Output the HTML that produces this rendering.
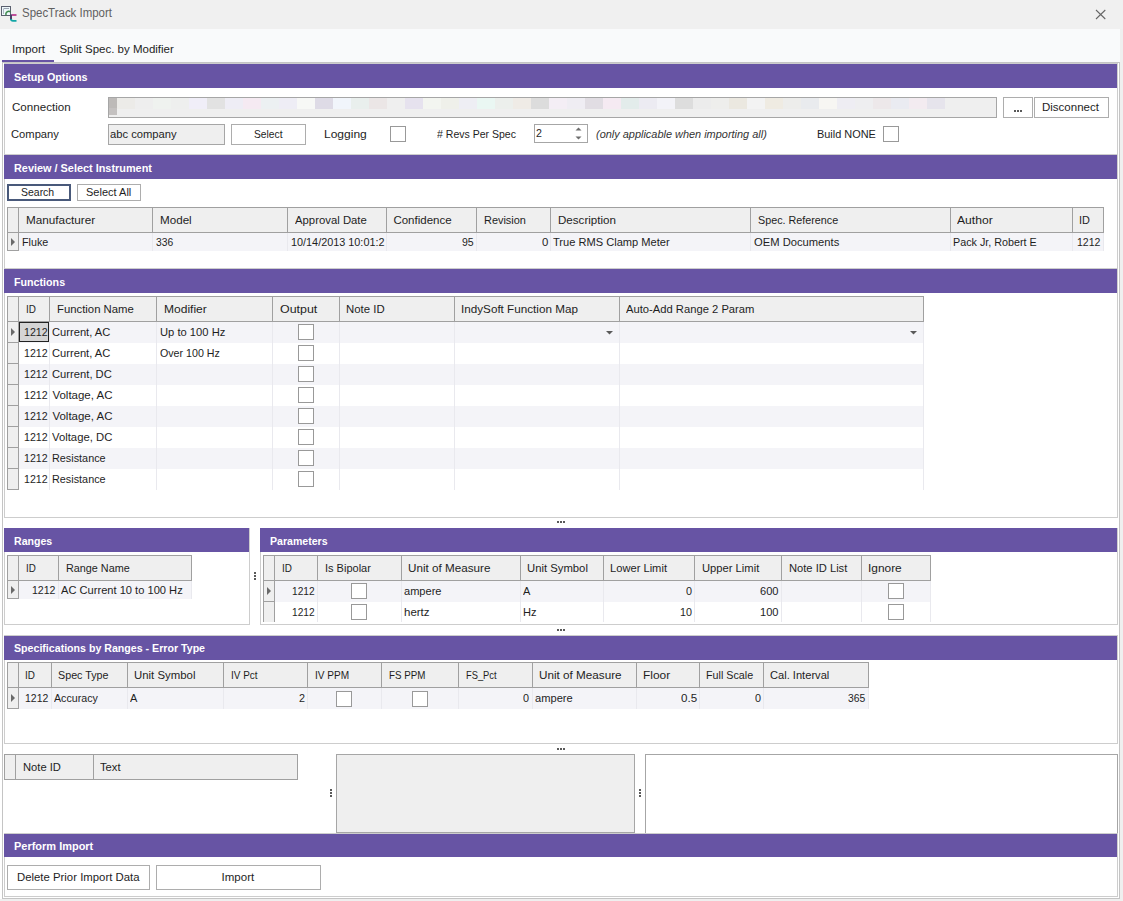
<!DOCTYPE html>
<html><head><meta charset="utf-8"><title>SpecTrack Import</title><style>
html,body{margin:0;padding:0;}
body{width:1123px;height:901px;position:relative;overflow:hidden;background:#ffffff;font-family:"Liberation Sans", sans-serif;}
body>div,body>svg{position:absolute;}
.t{white-space:nowrap;}
</style></head><body>
<div style="left:0px;top:0px;width:1123px;height:29px;background:#f0f0f0;"></div>
<div style="left:0px;top:29px;width:1123px;height:33px;background:#f9fafb;"></div>
<div class="t" style="left:22.20px;top:6.84px;font-size:12px;line-height:12px;font-weight:normal;color:#606060;font-style:normal;transform:scaleX(0.9548);transform-origin:0 0;">SpecTrack Import</div>
<svg style="left:1094px;top:8px" width="14" height="13" viewBox="0 0 14 13"><path d="M2 2 L11.3 11 M11.3 2 L2 11" stroke="#666666" stroke-width="1.05" fill="none"/></svg>
<svg style="left:0px;top:0px" width="20" height="26" viewBox="0 0 20 26"><rect x="1.5" y="6.5" width="9" height="9" fill="#eef7fa" stroke="#5a5f6e" stroke-width="1"/><path d="M3.5 8.5 H9" stroke="#9aa3b0" stroke-width="1"/><path d="M3.5 9 V14" stroke="#b0b8c4" stroke-width="1"/><path d="M6 15.2 A3 3 0 0 1 10.6 11.8" stroke="#3d8a4c" stroke-width="1.5" fill="none"/><rect x="11.5" y="14" width="5" height="2" fill="#c0509a"/><rect x="10" y="14.5" width="2" height="5.5" fill="#4b4068"/><path d="M11 19 Q11 20.8 13 20.8 H16.5" stroke="#12a6a6" stroke-width="1.8" fill="none"/></svg>
<div class="t" style="left:11.70px;top:44.27px;font-size:11.5px;line-height:11.5px;font-weight:normal;color:#1e1e1e;font-style:normal;transform:scaleX(1.0153);transform-origin:0 0;">Import</div>
<div class="t" style="left:59.40px;top:44.27px;font-size:11.5px;line-height:11.5px;font-weight:normal;color:#1e1e1e;font-style:normal;">Split Spec. by Modifier</div>
<div style="left:2px;top:60px;width:52px;height:2px;background:#6754a4;"></div>
<div style="left:2px;top:62px;width:1118px;height:837px;background:#ffffff;"></div>
<div style="left:2px;top:62px;width:1118px;height:1px;background:#c4c4c4;"></div>
<div style="left:2px;top:60px;width:52px;height:2px;background:#6754a4;"></div>
<div style="left:2px;top:62px;width:1px;height:837px;background:#c4c4c4;"></div>
<div style="left:1119px;top:62px;width:1px;height:837px;background:#c4c4c4;"></div>
<div style="left:2px;top:898px;width:1118px;height:1px;background:#c4c4c4;"></div>
<div style="left:1120px;top:29px;width:3px;height:872px;background:#efefef;"></div>
<div style="left:0px;top:899px;width:1123px;height:2px;background:#efefef;"></div>
<div style="left:4px;top:63px;width:1px;height:92px;background:#cdcdcd;"></div>
<div style="left:1117px;top:63px;width:1px;height:92px;background:#cdcdcd;"></div>
<div style="left:4px;top:154px;width:1114px;height:1px;background:#cdcdcd;"></div>
<div style="left:4px;top:63px;width:1114px;height:1px;background:#cdcdcd;"></div>
<div style="left:4px;top:64px;width:1113px;height:24px;background:#6754a4;"></div>
<div class="t" style="left:14.40px;top:72.27px;font-size:11.5px;line-height:11.5px;font-weight:bold;color:#ffffff;font-style:normal;transform:scaleX(0.9364);transform-origin:0 0;">Setup Options</div>
<div class="t" style="left:11.90px;top:102.27px;font-size:11.5px;line-height:11.5px;font-weight:normal;color:#1e1e1e;font-style:normal;transform:scaleX(1.0070);transform-origin:0 0;">Connection</div>
<div class="t" style="left:11.20px;top:129.27px;font-size:11.5px;line-height:11.5px;font-weight:normal;color:#1e1e1e;font-style:normal;transform:scaleX(0.9732);transform-origin:0 0;">Company</div>
<div style="left:108px;top:97px;width:889px;height:21px;background:#efefef;box-sizing:border-box;border:1px solid #a6a6a6;"></div>
<div style="left:117px;top:98px;width:18px;height:11px;background:#ecebe8;"></div>
<div style="left:135px;top:98px;width:18px;height:11px;background:#eeeeee;"></div>
<div style="left:153px;top:98px;width:18px;height:11px;background:#eff2ef;"></div>
<div style="left:171px;top:98px;width:18px;height:11px;background:#eeefee;"></div>
<div style="left:189px;top:98px;width:18px;height:11px;background:#f0eef8;"></div>
<div style="left:207px;top:98px;width:18px;height:11px;background:#e2e2e2;"></div>
<div style="left:225px;top:98px;width:18px;height:11px;background:#eeedf5;"></div>
<div style="left:243px;top:98px;width:18px;height:11px;background:#f5eaf2;"></div>
<div style="left:261px;top:98px;width:18px;height:11px;background:#ecf0f2;"></div>
<div style="left:279px;top:98px;width:18px;height:11px;background:#eeedf5;"></div>
<div style="left:297px;top:98px;width:18px;height:11px;background:#f7f8f6;"></div>
<div style="left:315px;top:98px;width:18px;height:11px;background:#dedbe6;"></div>
<div style="left:333px;top:98px;width:18px;height:11px;background:#f1f5fb;"></div>
<div style="left:351px;top:98px;width:18px;height:11px;background:#e9efed;"></div>
<div style="left:369px;top:98px;width:18px;height:11px;background:#ebe6e6;"></div>
<div style="left:387px;top:98px;width:18px;height:11px;background:#efefef;"></div>
<div style="left:405px;top:98px;width:18px;height:11px;background:#e6e2ee;"></div>
<div style="left:423px;top:98px;width:18px;height:11px;background:#f3f5f0;"></div>
<div style="left:441px;top:98px;width:18px;height:11px;background:#eff0ea;"></div>
<div style="left:459px;top:98px;width:18px;height:11px;background:#eeeef4;"></div>
<div style="left:477px;top:98px;width:18px;height:11px;background:#eaf7f3;"></div>
<div style="left:495px;top:98px;width:18px;height:11px;background:#ecefec;"></div>
<div style="left:513px;top:98px;width:18px;height:11px;background:#efebe6;"></div>
<div style="left:531px;top:98px;width:18px;height:11px;background:#dcdcdc;"></div>
<div style="left:549px;top:98px;width:18px;height:11px;background:#f4eef5;"></div>
<div style="left:567px;top:98px;width:18px;height:11px;background:#efedf3;"></div>
<div style="left:585px;top:98px;width:18px;height:11px;background:#e1dde3;"></div>
<div style="left:603px;top:98px;width:18px;height:11px;background:#f5eaf2;"></div>
<div style="left:621px;top:98px;width:18px;height:11px;background:#e3eceb;"></div>
<div style="left:639px;top:98px;width:18px;height:11px;background:#ecebf2;"></div>
<div style="left:657px;top:98px;width:18px;height:11px;background:#f3f3f8;"></div>
<div style="left:675px;top:98px;width:18px;height:11px;background:#dddddd;"></div>
<div style="left:693px;top:98px;width:18px;height:11px;background:#ececec;"></div>
<div style="left:711px;top:98px;width:18px;height:11px;background:#eeeeec;"></div>
<div style="left:729px;top:98px;width:18px;height:11px;background:#ebe8e0;"></div>
<div style="left:747px;top:98px;width:18px;height:11px;background:#f3f3f3;"></div>
<div style="left:765px;top:98px;width:18px;height:11px;background:#efebe2;"></div>
<div style="left:783px;top:98px;width:18px;height:11px;background:#ededeb;"></div>
<div style="left:801px;top:98px;width:18px;height:11px;background:#e9ebee;"></div>
<div style="left:819px;top:98px;width:18px;height:11px;background:#f7f6f3;"></div>
<div style="left:837px;top:98px;width:18px;height:11px;background:#eeedf3;"></div>
<div style="left:855px;top:98px;width:18px;height:11px;background:#eeeef0;"></div>
<div style="left:873px;top:98px;width:18px;height:11px;background:#ede8ea;"></div>
<div style="left:891px;top:98px;width:18px;height:11px;background:#eaebf1;"></div>
<div style="left:909px;top:98px;width:18px;height:11px;background:#f3ebf0;"></div>
<div style="left:927px;top:98px;width:18px;height:11px;background:#e6e4ec;"></div>
<div style="left:109px;top:98px;width:8px;height:17px;background:#c4c1c0;"></div>
<div style="left:109px;top:98px;width:8px;height:10px;background:#bdbab8;"></div>
<div style="left:1003px;top:97px;width:30px;height:21px;box-sizing:border-box;border:1px solid #adadad;background:#ffffff;"></div>
<svg style="left:1014px;top:110px" width="8" height="2"><rect x="0" y="0" width="2" height="2" fill="#5a5a5a"/><rect x="3" y="0" width="2" height="2" fill="#5a5a5a"/><rect x="6" y="0" width="2" height="2" fill="#5a5a5a"/></svg>
<div style="left:1034px;top:97px;width:75px;height:21px;box-sizing:border-box;border:1px solid #adadad;background:#ffffff;"></div>
<div class="t" style="left:1042.00px;top:101.77px;font-size:11.5px;line-height:11.5px;font-weight:normal;color:#1e1e1e;font-style:normal;">Disconnect</div>
<div style="left:108px;top:124px;width:117px;height:21px;background:#efefef;box-sizing:border-box;border:1px solid #a6a6a6;"></div>
<div class="t" style="left:110.40px;top:129.27px;font-size:11.5px;line-height:11.5px;font-weight:normal;color:#1e1e1e;font-style:normal;transform:scaleX(0.9733);transform-origin:0 0;">abc company</div>
<div style="left:231px;top:124px;width:75px;height:21px;box-sizing:border-box;border:1px solid #adadad;background:#ffffff;"></div>
<div class="t" style="left:253.90px;top:129.27px;font-size:11.5px;line-height:11.5px;font-weight:normal;color:#1e1e1e;font-style:normal;transform:scaleX(0.8915);transform-origin:0 0;">Select</div>
<div class="t" style="left:324.20px;top:129.27px;font-size:11.5px;line-height:11.5px;font-weight:normal;color:#1e1e1e;font-style:normal;transform:scaleX(1.0454);transform-origin:0 0;">Logging</div>
<div style="left:390px;top:126px;width:16px;height:16px;background:#ffffff;box-sizing:border-box;border:1px solid #999999;"></div>
<div class="t" style="left:436.90px;top:129.27px;font-size:11.5px;line-height:11.5px;font-weight:normal;color:#1e1e1e;font-style:normal;transform:scaleX(0.9153);transform-origin:0 0;"># Revs Per Spec</div>
<div style="left:534px;top:124px;width:54px;height:19px;background:#ffffff;box-sizing:border-box;border:1px solid #a6a6a6;"></div>
<div class="t" style="left:535.90px;top:128.27px;font-size:11.5px;line-height:11.5px;font-weight:normal;color:#1e1e1e;font-style:normal;transform:scaleX(0.9244);transform-origin:0 0;">2</div>
<svg style="left:574px;top:126px" width="9" height="15" viewBox="0 0 9 15"><path d="M1.5 4.5 L4.5 1.5 L7.5 4.5 Z" fill="#6d6d6d"/><path d="M1.5 10.5 L4.5 13.5 L7.5 10.5 Z" fill="#6d6d6d"/></svg>
<div class="t" style="left:596.20px;top:129.27px;font-size:11.5px;line-height:11.5px;font-weight:normal;color:#333333;font-style:italic;transform:scaleX(0.9508);transform-origin:0 0;">(only applicable when importing all)</div>
<div class="t" style="left:817.30px;top:129.27px;font-size:11.5px;line-height:11.5px;font-weight:normal;color:#1e1e1e;font-style:normal;transform:scaleX(0.9502);transform-origin:0 0;">Build NONE</div>
<div style="left:883px;top:126px;width:16px;height:16px;background:#ffffff;box-sizing:border-box;border:1px solid #999999;"></div>
<div style="left:4px;top:154px;width:1px;height:115px;background:#cdcdcd;"></div>
<div style="left:1117px;top:154px;width:1px;height:115px;background:#cdcdcd;"></div>
<div style="left:4px;top:268px;width:1114px;height:1px;background:#cdcdcd;"></div>
<div style="left:4px;top:154px;width:1114px;height:1px;background:#cdcdcd;"></div>
<div style="left:4px;top:155px;width:1113px;height:24px;background:#6754a4;"></div>
<div class="t" style="left:14.40px;top:163.27px;font-size:11.5px;line-height:11.5px;font-weight:bold;color:#ffffff;font-style:normal;transform:scaleX(0.9464);transform-origin:0 0;">Review / Select Instrument</div>
<div style="left:7px;top:184px;width:64px;height:17px;box-sizing:border-box;border:2px solid #49597a;background:#ffffff;"></div>
<div class="t" style="left:21.40px;top:187.27px;font-size:11.5px;line-height:11.5px;font-weight:normal;color:#1e1e1e;font-style:normal;transform:scaleX(0.9107);transform-origin:0 0;">Search</div>
<div style="left:77px;top:184px;width:64px;height:17px;box-sizing:border-box;border:1px solid #adadad;background:#ffffff;"></div>
<div class="t" style="left:85.50px;top:187.27px;font-size:11.5px;line-height:11.5px;font-weight:normal;color:#1e1e1e;font-style:normal;transform:scaleX(0.9573);transform-origin:0 0;">Select All</div>
<div style="left:7px;top:207px;width:1097px;height:26px;background:#efefef;"></div>
<div style="left:7px;top:207px;width:1097px;height:1px;background:#a0a0a0;"></div>
<div style="left:7px;top:232px;width:1097px;height:1px;background:#a0a0a0;"></div>
<div style="left:7px;top:207px;width:1px;height:26px;background:#a0a0a0;"></div>
<div style="left:1103px;top:207px;width:1px;height:26px;background:#a0a0a0;"></div>
<div style="left:18px;top:207px;width:1px;height:25px;background:#a0a0a0;"></div>
<div style="left:152px;top:207px;width:1px;height:25px;background:#a0a0a0;"></div>
<div style="left:287px;top:207px;width:1px;height:25px;background:#a0a0a0;"></div>
<div style="left:386px;top:207px;width:1px;height:25px;background:#a0a0a0;"></div>
<div style="left:476px;top:207px;width:1px;height:25px;background:#a0a0a0;"></div>
<div style="left:550px;top:207px;width:1px;height:25px;background:#a0a0a0;"></div>
<div style="left:750px;top:207px;width:1px;height:25px;background:#a0a0a0;"></div>
<div style="left:950px;top:207px;width:1px;height:25px;background:#a0a0a0;"></div>
<div style="left:1072px;top:207px;width:1px;height:25px;background:#a0a0a0;"></div>
<div style="left:19px;top:233px;width:1085px;height:18px;background:#f4f4f8;"></div>
<div style="left:7px;top:233px;width:11px;height:18px;background:#efefef;"></div>
<div style="left:7px;top:233px;width:1px;height:18px;background:#a0a0a0;"></div>
<div style="left:18px;top:233px;width:1px;height:18px;background:#a0a0a0;"></div>
<div style="left:7px;top:250px;width:12px;height:1px;background:#a0a0a0;"></div>
<div style="left:152px;top:233px;width:1px;height:18px;background:#e9e9ee;"></div>
<div style="left:287px;top:233px;width:1px;height:18px;background:#e9e9ee;"></div>
<div style="left:386px;top:233px;width:1px;height:18px;background:#e9e9ee;"></div>
<div style="left:476px;top:233px;width:1px;height:18px;background:#e9e9ee;"></div>
<div style="left:550px;top:233px;width:1px;height:18px;background:#e9e9ee;"></div>
<div style="left:750px;top:233px;width:1px;height:18px;background:#e9e9ee;"></div>
<div style="left:950px;top:233px;width:1px;height:18px;background:#e9e9ee;"></div>
<div style="left:1072px;top:233px;width:1px;height:18px;background:#e9e9ee;"></div>
<div style="left:1103px;top:233px;width:1px;height:18px;background:#e9e9ee;"></div>
<svg style="left:11px;top:238px" width="5" height="8" viewBox="0 0 5 8"><path d="M0 0 L4 4 L0 8 Z" fill="#6a6a6a"/></svg>
<div class="t" style="left:25.60px;top:214.77px;font-size:11.5px;line-height:11.5px;font-weight:normal;color:#1e1e1e;font-style:normal;transform:scaleX(1.0202);transform-origin:0 0;">Manufacturer</div>
<div class="t" style="left:159.70px;top:214.77px;font-size:11.5px;line-height:11.5px;font-weight:normal;color:#1e1e1e;font-style:normal;transform:scaleX(1.0116);transform-origin:0 0;">Model</div>
<div class="t" style="left:294.60px;top:214.77px;font-size:11.5px;line-height:11.5px;font-weight:normal;color:#1e1e1e;font-style:normal;transform:scaleX(0.9856);transform-origin:0 0;">Approval Date</div>
<div class="t" style="left:393.40px;top:214.77px;font-size:11.5px;line-height:11.5px;font-weight:normal;color:#1e1e1e;font-style:normal;">Confidence</div>
<div class="t" style="left:483.50px;top:214.77px;font-size:11.5px;line-height:11.5px;font-weight:normal;color:#1e1e1e;font-style:normal;transform:scaleX(0.9501);transform-origin:0 0;">Revision</div>
<div class="t" style="left:557.50px;top:214.77px;font-size:11.5px;line-height:11.5px;font-weight:normal;color:#1e1e1e;font-style:normal;transform:scaleX(1.0070);transform-origin:0 0;">Description</div>
<div class="t" style="left:757.70px;top:214.77px;font-size:11.5px;line-height:11.5px;font-weight:normal;color:#1e1e1e;font-style:normal;transform:scaleX(0.9361);transform-origin:0 0;">Spec. Reference</div>
<div class="t" style="left:957.30px;top:214.77px;font-size:11.5px;line-height:11.5px;font-weight:normal;color:#1e1e1e;font-style:normal;transform:scaleX(1.0541);transform-origin:0 0;">Author</div>
<div class="t" style="left:1078.70px;top:214.77px;font-size:11.5px;line-height:11.5px;font-weight:normal;color:#1e1e1e;font-style:normal;transform:scaleX(0.9478);transform-origin:0 0;">ID</div>
<div class="t" style="left:21.90px;top:236.77px;font-size:11.5px;line-height:11.5px;font-weight:normal;color:#1e1e1e;font-style:normal;transform:scaleX(0.9354);transform-origin:0 0;">Fluke</div>
<div class="t" style="left:155.70px;top:236.77px;font-size:11.5px;line-height:11.5px;font-weight:normal;color:#1e1e1e;font-style:normal;transform:scaleX(0.8956);transform-origin:0 0;">336</div>
<div class="t" style="left:290.50px;top:236.77px;font-size:11.5px;line-height:11.5px;font-weight:normal;color:#1e1e1e;font-style:normal;transform:scaleX(0.9432);transform-origin:0 0;">10/14/2013 10:01:2</div>
<div class="t" style="left:462.00px;top:236.77px;font-size:11.5px;line-height:11.5px;font-weight:normal;color:#1e1e1e;font-style:normal;transform:scaleX(0.9166);transform-origin:0 0;">95</div>
<div class="t" style="left:541.50px;top:236.77px;font-size:11.5px;line-height:11.5px;font-weight:normal;color:#1e1e1e;font-style:normal;transform:scaleX(0.9871);transform-origin:0 0;">0</div>
<div class="t" style="left:553.00px;top:236.77px;font-size:11.5px;line-height:11.5px;font-weight:normal;color:#1e1e1e;font-style:normal;transform:scaleX(0.9646);transform-origin:0 0;">True RMS Clamp Meter</div>
<div class="t" style="left:753.60px;top:236.77px;font-size:11.5px;line-height:11.5px;font-weight:normal;color:#1e1e1e;font-style:normal;transform:scaleX(0.9741);transform-origin:0 0;">OEM Documents</div>
<div class="t" style="left:953.00px;top:236.77px;font-size:11.5px;line-height:11.5px;font-weight:normal;color:#1e1e1e;font-style:normal;transform:scaleX(0.9355);transform-origin:0 0;">Pack Jr, Robert E</div>
<div class="t" style="left:1077.00px;top:236.77px;font-size:11.5px;line-height:11.5px;font-weight:normal;color:#1e1e1e;font-style:normal;transform:scaleX(0.9184);transform-origin:0 0;">1212</div>
<div style="left:4px;top:268px;width:1px;height:250px;background:#cdcdcd;"></div>
<div style="left:1117px;top:268px;width:1px;height:250px;background:#cdcdcd;"></div>
<div style="left:4px;top:517px;width:1114px;height:1px;background:#cdcdcd;"></div>
<div style="left:4px;top:268px;width:1114px;height:1px;background:#cdcdcd;"></div>
<div style="left:4px;top:269px;width:1113px;height:24px;background:#6754a4;"></div>
<div class="t" style="left:14.40px;top:277.27px;font-size:11.5px;line-height:11.5px;font-weight:bold;color:#ffffff;font-style:normal;transform:scaleX(0.9296);transform-origin:0 0;">Functions</div>
<div style="left:7px;top:296px;width:917px;height:26px;background:#efefef;"></div>
<div style="left:7px;top:296px;width:917px;height:1px;background:#a0a0a0;"></div>
<div style="left:7px;top:321px;width:917px;height:1px;background:#a0a0a0;"></div>
<div style="left:7px;top:296px;width:1px;height:26px;background:#a0a0a0;"></div>
<div style="left:923px;top:296px;width:1px;height:26px;background:#a0a0a0;"></div>
<div style="left:18px;top:296px;width:1px;height:25px;background:#a0a0a0;"></div>
<div style="left:49px;top:296px;width:1px;height:25px;background:#a0a0a0;"></div>
<div style="left:156px;top:296px;width:1px;height:25px;background:#a0a0a0;"></div>
<div style="left:272px;top:296px;width:1px;height:25px;background:#a0a0a0;"></div>
<div style="left:339px;top:296px;width:1px;height:25px;background:#a0a0a0;"></div>
<div style="left:454px;top:296px;width:1px;height:25px;background:#a0a0a0;"></div>
<div style="left:619px;top:296px;width:1px;height:25px;background:#a0a0a0;"></div>
<div style="left:19px;top:322px;width:905px;height:21px;background:#f4f4f8;"></div>
<div style="left:7px;top:322px;width:11px;height:21px;background:#efefef;"></div>
<div style="left:7px;top:322px;width:1px;height:21px;background:#a0a0a0;"></div>
<div style="left:18px;top:322px;width:1px;height:21px;background:#a0a0a0;"></div>
<div style="left:7px;top:342px;width:12px;height:1px;background:#a0a0a0;"></div>
<div style="left:49px;top:322px;width:1px;height:21px;background:#e9e9ee;"></div>
<div style="left:156px;top:322px;width:1px;height:21px;background:#e9e9ee;"></div>
<div style="left:272px;top:322px;width:1px;height:21px;background:#e9e9ee;"></div>
<div style="left:339px;top:322px;width:1px;height:21px;background:#e9e9ee;"></div>
<div style="left:454px;top:322px;width:1px;height:21px;background:#e9e9ee;"></div>
<div style="left:619px;top:322px;width:1px;height:21px;background:#e9e9ee;"></div>
<div style="left:923px;top:322px;width:1px;height:21px;background:#e9e9ee;"></div>
<svg style="left:11px;top:328px" width="5" height="8" viewBox="0 0 5 8"><path d="M0 0 L4 4 L0 8 Z" fill="#6a6a6a"/></svg>
<div style="left:19px;top:343px;width:905px;height:21px;background:#ffffff;"></div>
<div style="left:7px;top:343px;width:11px;height:21px;background:#efefef;"></div>
<div style="left:7px;top:343px;width:1px;height:21px;background:#a0a0a0;"></div>
<div style="left:18px;top:343px;width:1px;height:21px;background:#a0a0a0;"></div>
<div style="left:7px;top:363px;width:12px;height:1px;background:#a0a0a0;"></div>
<div style="left:49px;top:343px;width:1px;height:21px;background:#e9e9ee;"></div>
<div style="left:156px;top:343px;width:1px;height:21px;background:#e9e9ee;"></div>
<div style="left:272px;top:343px;width:1px;height:21px;background:#e9e9ee;"></div>
<div style="left:339px;top:343px;width:1px;height:21px;background:#e9e9ee;"></div>
<div style="left:454px;top:343px;width:1px;height:21px;background:#e9e9ee;"></div>
<div style="left:619px;top:343px;width:1px;height:21px;background:#e9e9ee;"></div>
<div style="left:923px;top:343px;width:1px;height:21px;background:#e9e9ee;"></div>
<div style="left:19px;top:364px;width:905px;height:21px;background:#f4f4f8;"></div>
<div style="left:7px;top:364px;width:11px;height:21px;background:#efefef;"></div>
<div style="left:7px;top:364px;width:1px;height:21px;background:#a0a0a0;"></div>
<div style="left:18px;top:364px;width:1px;height:21px;background:#a0a0a0;"></div>
<div style="left:7px;top:384px;width:12px;height:1px;background:#a0a0a0;"></div>
<div style="left:49px;top:364px;width:1px;height:21px;background:#e9e9ee;"></div>
<div style="left:156px;top:364px;width:1px;height:21px;background:#e9e9ee;"></div>
<div style="left:272px;top:364px;width:1px;height:21px;background:#e9e9ee;"></div>
<div style="left:339px;top:364px;width:1px;height:21px;background:#e9e9ee;"></div>
<div style="left:454px;top:364px;width:1px;height:21px;background:#e9e9ee;"></div>
<div style="left:619px;top:364px;width:1px;height:21px;background:#e9e9ee;"></div>
<div style="left:923px;top:364px;width:1px;height:21px;background:#e9e9ee;"></div>
<div style="left:19px;top:385px;width:905px;height:21px;background:#ffffff;"></div>
<div style="left:7px;top:385px;width:11px;height:21px;background:#efefef;"></div>
<div style="left:7px;top:385px;width:1px;height:21px;background:#a0a0a0;"></div>
<div style="left:18px;top:385px;width:1px;height:21px;background:#a0a0a0;"></div>
<div style="left:7px;top:405px;width:12px;height:1px;background:#a0a0a0;"></div>
<div style="left:49px;top:385px;width:1px;height:21px;background:#e9e9ee;"></div>
<div style="left:156px;top:385px;width:1px;height:21px;background:#e9e9ee;"></div>
<div style="left:272px;top:385px;width:1px;height:21px;background:#e9e9ee;"></div>
<div style="left:339px;top:385px;width:1px;height:21px;background:#e9e9ee;"></div>
<div style="left:454px;top:385px;width:1px;height:21px;background:#e9e9ee;"></div>
<div style="left:619px;top:385px;width:1px;height:21px;background:#e9e9ee;"></div>
<div style="left:923px;top:385px;width:1px;height:21px;background:#e9e9ee;"></div>
<div style="left:19px;top:406px;width:905px;height:21px;background:#f4f4f8;"></div>
<div style="left:7px;top:406px;width:11px;height:21px;background:#efefef;"></div>
<div style="left:7px;top:406px;width:1px;height:21px;background:#a0a0a0;"></div>
<div style="left:18px;top:406px;width:1px;height:21px;background:#a0a0a0;"></div>
<div style="left:7px;top:426px;width:12px;height:1px;background:#a0a0a0;"></div>
<div style="left:49px;top:406px;width:1px;height:21px;background:#e9e9ee;"></div>
<div style="left:156px;top:406px;width:1px;height:21px;background:#e9e9ee;"></div>
<div style="left:272px;top:406px;width:1px;height:21px;background:#e9e9ee;"></div>
<div style="left:339px;top:406px;width:1px;height:21px;background:#e9e9ee;"></div>
<div style="left:454px;top:406px;width:1px;height:21px;background:#e9e9ee;"></div>
<div style="left:619px;top:406px;width:1px;height:21px;background:#e9e9ee;"></div>
<div style="left:923px;top:406px;width:1px;height:21px;background:#e9e9ee;"></div>
<div style="left:19px;top:427px;width:905px;height:21px;background:#ffffff;"></div>
<div style="left:7px;top:427px;width:11px;height:21px;background:#efefef;"></div>
<div style="left:7px;top:427px;width:1px;height:21px;background:#a0a0a0;"></div>
<div style="left:18px;top:427px;width:1px;height:21px;background:#a0a0a0;"></div>
<div style="left:7px;top:447px;width:12px;height:1px;background:#a0a0a0;"></div>
<div style="left:49px;top:427px;width:1px;height:21px;background:#e9e9ee;"></div>
<div style="left:156px;top:427px;width:1px;height:21px;background:#e9e9ee;"></div>
<div style="left:272px;top:427px;width:1px;height:21px;background:#e9e9ee;"></div>
<div style="left:339px;top:427px;width:1px;height:21px;background:#e9e9ee;"></div>
<div style="left:454px;top:427px;width:1px;height:21px;background:#e9e9ee;"></div>
<div style="left:619px;top:427px;width:1px;height:21px;background:#e9e9ee;"></div>
<div style="left:923px;top:427px;width:1px;height:21px;background:#e9e9ee;"></div>
<div style="left:19px;top:448px;width:905px;height:21px;background:#f4f4f8;"></div>
<div style="left:7px;top:448px;width:11px;height:21px;background:#efefef;"></div>
<div style="left:7px;top:448px;width:1px;height:21px;background:#a0a0a0;"></div>
<div style="left:18px;top:448px;width:1px;height:21px;background:#a0a0a0;"></div>
<div style="left:7px;top:468px;width:12px;height:1px;background:#a0a0a0;"></div>
<div style="left:49px;top:448px;width:1px;height:21px;background:#e9e9ee;"></div>
<div style="left:156px;top:448px;width:1px;height:21px;background:#e9e9ee;"></div>
<div style="left:272px;top:448px;width:1px;height:21px;background:#e9e9ee;"></div>
<div style="left:339px;top:448px;width:1px;height:21px;background:#e9e9ee;"></div>
<div style="left:454px;top:448px;width:1px;height:21px;background:#e9e9ee;"></div>
<div style="left:619px;top:448px;width:1px;height:21px;background:#e9e9ee;"></div>
<div style="left:923px;top:448px;width:1px;height:21px;background:#e9e9ee;"></div>
<div style="left:19px;top:469px;width:905px;height:21px;background:#ffffff;"></div>
<div style="left:7px;top:469px;width:11px;height:21px;background:#efefef;"></div>
<div style="left:7px;top:469px;width:1px;height:21px;background:#a0a0a0;"></div>
<div style="left:18px;top:469px;width:1px;height:21px;background:#a0a0a0;"></div>
<div style="left:7px;top:489px;width:12px;height:1px;background:#a0a0a0;"></div>
<div style="left:49px;top:469px;width:1px;height:21px;background:#e9e9ee;"></div>
<div style="left:156px;top:469px;width:1px;height:21px;background:#e9e9ee;"></div>
<div style="left:272px;top:469px;width:1px;height:21px;background:#e9e9ee;"></div>
<div style="left:339px;top:469px;width:1px;height:21px;background:#e9e9ee;"></div>
<div style="left:454px;top:469px;width:1px;height:21px;background:#e9e9ee;"></div>
<div style="left:619px;top:469px;width:1px;height:21px;background:#e9e9ee;"></div>
<div style="left:923px;top:469px;width:1px;height:21px;background:#e9e9ee;"></div>
<div class="t" style="left:25.60px;top:303.97px;font-size:11.5px;line-height:11.5px;font-weight:normal;color:#1e1e1e;font-style:normal;transform:scaleX(0.8609);transform-origin:0 0;">ID</div>
<div class="t" style="left:56.60px;top:303.97px;font-size:11.5px;line-height:11.5px;font-weight:normal;color:#1e1e1e;font-style:normal;transform:scaleX(0.9850);transform-origin:0 0;">Function Name</div>
<div class="t" style="left:163.90px;top:303.97px;font-size:11.5px;line-height:11.5px;font-weight:normal;color:#1e1e1e;font-style:normal;transform:scaleX(1.0469);transform-origin:0 0;">Modifier</div>
<div class="t" style="left:279.60px;top:303.97px;font-size:11.5px;line-height:11.5px;font-weight:normal;color:#1e1e1e;font-style:normal;transform:scaleX(1.0812);transform-origin:0 0;">Output</div>
<div class="t" style="left:346.10px;top:303.97px;font-size:11.5px;line-height:11.5px;font-weight:normal;color:#1e1e1e;font-style:normal;transform:scaleX(0.9901);transform-origin:0 0;">Note ID</div>
<div class="t" style="left:461.30px;top:303.97px;font-size:11.5px;line-height:11.5px;font-weight:normal;color:#1e1e1e;font-style:normal;transform:scaleX(1.0160);transform-origin:0 0;">IndySoft Function Map</div>
<div class="t" style="left:626.10px;top:303.97px;font-size:11.5px;line-height:11.5px;font-weight:normal;color:#1e1e1e;font-style:normal;transform:scaleX(0.9751);transform-origin:0 0;">Auto-Add Range 2 Param</div>
<div style="left:19px;top:322px;width:30px;height:20px;background:#d5d5d5;box-sizing:border-box;border:1px solid #222222;"></div>
<div class="t" style="left:23.50px;top:326.57px;font-size:11.5px;line-height:11.5px;font-weight:normal;color:#1e1e1e;font-style:normal;transform:scaleX(0.9262);transform-origin:0 0;">1212</div>
<div class="t" style="left:52.40px;top:326.57px;font-size:11.5px;line-height:11.5px;font-weight:normal;color:#1e1e1e;font-style:normal;transform:scaleX(0.9703);transform-origin:0 0;">Current, AC</div>
<div class="t" style="left:159.60px;top:326.57px;font-size:11.5px;line-height:11.5px;font-weight:normal;color:#1e1e1e;font-style:normal;transform:scaleX(0.9731);transform-origin:0 0;">Up to 100 Hz</div>
<div style="left:298px;top:324px;width:16px;height:16px;background:#ffffff;box-sizing:border-box;border:1px solid #999999;"></div>
<div class="t" style="left:23.50px;top:347.57px;font-size:11.5px;line-height:11.5px;font-weight:normal;color:#1e1e1e;font-style:normal;transform:scaleX(0.9262);transform-origin:0 0;">1212</div>
<div class="t" style="left:52.40px;top:347.57px;font-size:11.5px;line-height:11.5px;font-weight:normal;color:#1e1e1e;font-style:normal;transform:scaleX(0.9703);transform-origin:0 0;">Current, AC</div>
<div class="t" style="left:159.60px;top:347.57px;font-size:11.5px;line-height:11.5px;font-weight:normal;color:#1e1e1e;font-style:normal;transform:scaleX(0.9261);transform-origin:0 0;">Over 100 Hz</div>
<div style="left:298px;top:345px;width:16px;height:16px;background:#ffffff;box-sizing:border-box;border:1px solid #999999;"></div>
<div class="t" style="left:23.50px;top:368.57px;font-size:11.5px;line-height:11.5px;font-weight:normal;color:#1e1e1e;font-style:normal;transform:scaleX(0.9262);transform-origin:0 0;">1212</div>
<div class="t" style="left:52.40px;top:368.57px;font-size:11.5px;line-height:11.5px;font-weight:normal;color:#1e1e1e;font-style:normal;transform:scaleX(0.9747);transform-origin:0 0;">Current, DC</div>
<div style="left:298px;top:366px;width:16px;height:16px;background:#ffffff;box-sizing:border-box;border:1px solid #999999;"></div>
<div class="t" style="left:23.50px;top:389.57px;font-size:11.5px;line-height:11.5px;font-weight:normal;color:#1e1e1e;font-style:normal;transform:scaleX(0.9262);transform-origin:0 0;">1212</div>
<div class="t" style="left:52.40px;top:389.57px;font-size:11.5px;line-height:11.5px;font-weight:normal;color:#1e1e1e;font-style:normal;">Voltage, AC</div>
<div style="left:298px;top:387px;width:16px;height:16px;background:#ffffff;box-sizing:border-box;border:1px solid #999999;"></div>
<div class="t" style="left:23.50px;top:410.57px;font-size:11.5px;line-height:11.5px;font-weight:normal;color:#1e1e1e;font-style:normal;transform:scaleX(0.9262);transform-origin:0 0;">1212</div>
<div class="t" style="left:52.40px;top:410.57px;font-size:11.5px;line-height:11.5px;font-weight:normal;color:#1e1e1e;font-style:normal;">Voltage, AC</div>
<div style="left:298px;top:408px;width:16px;height:16px;background:#ffffff;box-sizing:border-box;border:1px solid #999999;"></div>
<div class="t" style="left:23.50px;top:431.57px;font-size:11.5px;line-height:11.5px;font-weight:normal;color:#1e1e1e;font-style:normal;transform:scaleX(0.9262);transform-origin:0 0;">1212</div>
<div class="t" style="left:52.40px;top:431.57px;font-size:11.5px;line-height:11.5px;font-weight:normal;color:#1e1e1e;font-style:normal;transform:scaleX(0.9828);transform-origin:0 0;">Voltage, DC</div>
<div style="left:298px;top:429px;width:16px;height:16px;background:#ffffff;box-sizing:border-box;border:1px solid #999999;"></div>
<div class="t" style="left:23.50px;top:452.57px;font-size:11.5px;line-height:11.5px;font-weight:normal;color:#1e1e1e;font-style:normal;transform:scaleX(0.9262);transform-origin:0 0;">1212</div>
<div class="t" style="left:52.40px;top:452.57px;font-size:11.5px;line-height:11.5px;font-weight:normal;color:#1e1e1e;font-style:normal;transform:scaleX(0.9425);transform-origin:0 0;">Resistance</div>
<div style="left:298px;top:450px;width:16px;height:16px;background:#ffffff;box-sizing:border-box;border:1px solid #999999;"></div>
<div class="t" style="left:23.50px;top:473.57px;font-size:11.5px;line-height:11.5px;font-weight:normal;color:#1e1e1e;font-style:normal;transform:scaleX(0.9262);transform-origin:0 0;">1212</div>
<div class="t" style="left:52.40px;top:473.57px;font-size:11.5px;line-height:11.5px;font-weight:normal;color:#1e1e1e;font-style:normal;transform:scaleX(0.9425);transform-origin:0 0;">Resistance</div>
<div style="left:298px;top:471px;width:16px;height:16px;background:#ffffff;box-sizing:border-box;border:1px solid #999999;"></div>
<svg style="left:605.5px;top:331px" width="7" height="4" viewBox="0 0 7 4"><path d="M0 0 H7 L3.5 3.5 Z" fill="#5a5a5a"/></svg>
<svg style="left:909.5px;top:331px" width="7" height="4" viewBox="0 0 7 4"><path d="M0 0 H7 L3.5 3.5 Z" fill="#5a5a5a"/></svg>
<svg style="left:557px;top:521px" width="8" height="2"><rect x="0" y="0" width="2" height="2" fill="#5a5a5a"/><rect x="3" y="0" width="2" height="2" fill="#5a5a5a"/><rect x="6" y="0" width="2" height="2" fill="#5a5a5a"/></svg>
<div style="left:4px;top:528px;width:1px;height:97px;background:#cdcdcd;"></div>
<div style="left:249px;top:528px;width:1px;height:97px;background:#cdcdcd;"></div>
<div style="left:4px;top:624px;width:246px;height:1px;background:#cdcdcd;"></div>
<div style="left:4px;top:528px;width:246px;height:1px;background:#cdcdcd;"></div>
<div style="left:4px;top:528px;width:245px;height:24px;background:#6754a4;"></div>
<div class="t" style="left:14.40px;top:536.27px;font-size:11.5px;line-height:11.5px;font-weight:bold;color:#ffffff;font-style:normal;transform:scaleX(0.9201);transform-origin:0 0;">Ranges</div>
<div style="left:7px;top:555px;width:185px;height:26px;background:#efefef;"></div>
<div style="left:7px;top:555px;width:185px;height:1px;background:#a0a0a0;"></div>
<div style="left:7px;top:580px;width:185px;height:1px;background:#a0a0a0;"></div>
<div style="left:7px;top:555px;width:1px;height:26px;background:#a0a0a0;"></div>
<div style="left:191px;top:555px;width:1px;height:26px;background:#a0a0a0;"></div>
<div style="left:18px;top:555px;width:1px;height:25px;background:#a0a0a0;"></div>
<div style="left:58px;top:555px;width:1px;height:25px;background:#a0a0a0;"></div>
<div style="left:19px;top:581px;width:173px;height:18px;background:#f4f4f8;"></div>
<div style="left:7px;top:581px;width:11px;height:18px;background:#efefef;"></div>
<div style="left:7px;top:581px;width:1px;height:18px;background:#a0a0a0;"></div>
<div style="left:18px;top:581px;width:1px;height:18px;background:#a0a0a0;"></div>
<div style="left:7px;top:598px;width:12px;height:1px;background:#a0a0a0;"></div>
<div style="left:58px;top:581px;width:1px;height:18px;background:#e9e9ee;"></div>
<div style="left:191px;top:581px;width:1px;height:18px;background:#e9e9ee;"></div>
<svg style="left:11px;top:586px" width="5" height="8" viewBox="0 0 5 8"><path d="M0 0 L4 4 L0 8 Z" fill="#6a6a6a"/></svg>
<div class="t" style="left:25.50px;top:562.77px;font-size:11.5px;line-height:11.5px;font-weight:normal;color:#1e1e1e;font-style:normal;transform:scaleX(0.8522);transform-origin:0 0;">ID</div>
<div class="t" style="left:65.70px;top:562.77px;font-size:11.5px;line-height:11.5px;font-weight:normal;color:#1e1e1e;font-style:normal;transform:scaleX(0.9404);transform-origin:0 0;">Range Name</div>
<div class="t" style="left:32.40px;top:585.27px;font-size:11.5px;line-height:11.5px;font-weight:normal;color:#1e1e1e;font-style:normal;transform:scaleX(0.9184);transform-origin:0 0;">1212</div>
<div class="t" style="left:61.20px;top:585.27px;font-size:11.5px;line-height:11.5px;font-weight:normal;color:#1e1e1e;font-style:normal;transform:scaleX(0.9664);transform-origin:0 0;">AC Current 10 to 100 Hz</div>
<svg style="left:254px;top:572px" width="2" height="8"><rect x="0" y="0" width="2" height="2" fill="#5a5a5a"/><rect x="0" y="3" width="2" height="2" fill="#5a5a5a"/><rect x="0" y="6" width="2" height="2" fill="#5a5a5a"/></svg>
<div style="left:260px;top:528px;width:1px;height:97px;background:#cdcdcd;"></div>
<div style="left:1117px;top:528px;width:1px;height:97px;background:#cdcdcd;"></div>
<div style="left:260px;top:624px;width:858px;height:1px;background:#cdcdcd;"></div>
<div style="left:260px;top:528px;width:858px;height:1px;background:#cdcdcd;"></div>
<div style="left:260px;top:528px;width:857px;height:24px;background:#6754a4;"></div>
<div class="t" style="left:270.40px;top:536.27px;font-size:11.5px;line-height:11.5px;font-weight:bold;color:#ffffff;font-style:normal;transform:scaleX(0.9190);transform-origin:0 0;">Parameters</div>
<div style="left:263px;top:555px;width:668px;height:26px;background:#efefef;"></div>
<div style="left:263px;top:555px;width:668px;height:1px;background:#a0a0a0;"></div>
<div style="left:263px;top:580px;width:668px;height:1px;background:#a0a0a0;"></div>
<div style="left:263px;top:555px;width:1px;height:26px;background:#a0a0a0;"></div>
<div style="left:930px;top:555px;width:1px;height:26px;background:#a0a0a0;"></div>
<div style="left:274px;top:555px;width:1px;height:25px;background:#a0a0a0;"></div>
<div style="left:317px;top:555px;width:1px;height:25px;background:#a0a0a0;"></div>
<div style="left:401px;top:555px;width:1px;height:25px;background:#a0a0a0;"></div>
<div style="left:520px;top:555px;width:1px;height:25px;background:#a0a0a0;"></div>
<div style="left:603px;top:555px;width:1px;height:25px;background:#a0a0a0;"></div>
<div style="left:694px;top:555px;width:1px;height:25px;background:#a0a0a0;"></div>
<div style="left:781px;top:555px;width:1px;height:25px;background:#a0a0a0;"></div>
<div style="left:861px;top:555px;width:1px;height:25px;background:#a0a0a0;"></div>
<div style="left:275px;top:581px;width:656px;height:21px;background:#f4f4f8;"></div>
<div style="left:263px;top:581px;width:11px;height:21px;background:#efefef;"></div>
<div style="left:263px;top:581px;width:1px;height:21px;background:#a0a0a0;"></div>
<div style="left:274px;top:581px;width:1px;height:21px;background:#a0a0a0;"></div>
<div style="left:263px;top:601px;width:12px;height:1px;background:#a0a0a0;"></div>
<div style="left:317px;top:581px;width:1px;height:21px;background:#e9e9ee;"></div>
<div style="left:401px;top:581px;width:1px;height:21px;background:#e9e9ee;"></div>
<div style="left:520px;top:581px;width:1px;height:21px;background:#e9e9ee;"></div>
<div style="left:603px;top:581px;width:1px;height:21px;background:#e9e9ee;"></div>
<div style="left:694px;top:581px;width:1px;height:21px;background:#e9e9ee;"></div>
<div style="left:781px;top:581px;width:1px;height:21px;background:#e9e9ee;"></div>
<div style="left:861px;top:581px;width:1px;height:21px;background:#e9e9ee;"></div>
<div style="left:930px;top:581px;width:1px;height:21px;background:#e9e9ee;"></div>
<svg style="left:267px;top:587px" width="5" height="8" viewBox="0 0 5 8"><path d="M0 0 L4 4 L0 8 Z" fill="#6a6a6a"/></svg>
<div style="left:275px;top:602px;width:656px;height:20px;background:#ffffff;"></div>
<div style="left:263px;top:602px;width:11px;height:20px;background:#efefef;"></div>
<div style="left:263px;top:602px;width:1px;height:20px;background:#a0a0a0;"></div>
<div style="left:274px;top:602px;width:1px;height:20px;background:#a0a0a0;"></div>
<div style="left:317px;top:602px;width:1px;height:20px;background:#e9e9ee;"></div>
<div style="left:401px;top:602px;width:1px;height:20px;background:#e9e9ee;"></div>
<div style="left:520px;top:602px;width:1px;height:20px;background:#e9e9ee;"></div>
<div style="left:603px;top:602px;width:1px;height:20px;background:#e9e9ee;"></div>
<div style="left:694px;top:602px;width:1px;height:20px;background:#e9e9ee;"></div>
<div style="left:781px;top:602px;width:1px;height:20px;background:#e9e9ee;"></div>
<div style="left:861px;top:602px;width:1px;height:20px;background:#e9e9ee;"></div>
<div style="left:930px;top:602px;width:1px;height:20px;background:#e9e9ee;"></div>
<div class="t" style="left:281.60px;top:562.77px;font-size:11.5px;line-height:11.5px;font-weight:normal;color:#1e1e1e;font-style:normal;transform:scaleX(0.8609);transform-origin:0 0;">ID</div>
<div class="t" style="left:324.50px;top:562.77px;font-size:11.5px;line-height:11.5px;font-weight:normal;color:#1e1e1e;font-style:normal;transform:scaleX(0.9571);transform-origin:0 0;">Is Bipolar</div>
<div class="t" style="left:408.20px;top:562.77px;font-size:11.5px;line-height:11.5px;font-weight:normal;color:#1e1e1e;font-style:normal;transform:scaleX(1.0149);transform-origin:0 0;">Unit of Measure</div>
<div class="t" style="left:527.40px;top:562.77px;font-size:11.5px;line-height:11.5px;font-weight:normal;color:#1e1e1e;font-style:normal;transform:scaleX(0.9825);transform-origin:0 0;">Unit Symbol</div>
<div class="t" style="left:610.30px;top:562.77px;font-size:11.5px;line-height:11.5px;font-weight:normal;color:#1e1e1e;font-style:normal;transform:scaleX(0.9690);transform-origin:0 0;">Lower Limit</div>
<div class="t" style="left:702.00px;top:562.77px;font-size:11.5px;line-height:11.5px;font-weight:normal;color:#1e1e1e;font-style:normal;transform:scaleX(0.9741);transform-origin:0 0;">Upper Limit</div>
<div class="t" style="left:788.50px;top:562.77px;font-size:11.5px;line-height:11.5px;font-weight:normal;color:#1e1e1e;font-style:normal;transform:scaleX(0.9703);transform-origin:0 0;">Note ID List</div>
<div class="t" style="left:867.60px;top:562.77px;font-size:11.5px;line-height:11.5px;font-weight:normal;color:#1e1e1e;font-style:normal;transform:scaleX(1.0337);transform-origin:0 0;">Ignore</div>
<div class="t" style="left:292.00px;top:586.27px;font-size:11.5px;line-height:11.5px;font-weight:normal;color:#1e1e1e;font-style:normal;transform:scaleX(0.8832);transform-origin:0 0;">1212</div>
<div style="left:351px;top:583px;width:16px;height:16px;background:#ffffff;box-sizing:border-box;border:1px solid #999999;"></div>
<div class="t" style="left:404.00px;top:586.27px;font-size:11.5px;line-height:11.5px;font-weight:normal;color:#1e1e1e;font-style:normal;transform:scaleX(0.9619);transform-origin:0 0;">ampere</div>
<div class="t" style="left:522.60px;top:586.27px;font-size:11.5px;line-height:11.5px;font-weight:normal;color:#1e1e1e;font-style:normal;transform:scaleX(0.9604);transform-origin:0 0;">A</div>
<div class="t" style="left:686.00px;top:586.27px;font-size:11.5px;line-height:11.5px;font-weight:normal;color:#1e1e1e;font-style:normal;transform:scaleX(0.9401);transform-origin:0 0;">0</div>
<div class="t" style="left:760.30px;top:586.27px;font-size:11.5px;line-height:11.5px;font-weight:normal;color:#1e1e1e;font-style:normal;transform:scaleX(0.9633);transform-origin:0 0;">600</div>
<div style="left:888px;top:583px;width:16px;height:16px;background:#ffffff;box-sizing:border-box;border:1px solid #999999;"></div>
<div class="t" style="left:292.00px;top:607.27px;font-size:11.5px;line-height:11.5px;font-weight:normal;color:#1e1e1e;font-style:normal;transform:scaleX(0.8832);transform-origin:0 0;">1212</div>
<div style="left:351px;top:604px;width:16px;height:16px;background:#ffffff;box-sizing:border-box;border:1px solid #999999;"></div>
<div class="t" style="left:404.00px;top:607.27px;font-size:11.5px;line-height:11.5px;font-weight:normal;color:#1e1e1e;font-style:normal;">hertz</div>
<div class="t" style="left:522.60px;top:607.27px;font-size:11.5px;line-height:11.5px;font-weight:normal;color:#1e1e1e;font-style:normal;transform:scaleX(0.9622);transform-origin:0 0;">Hz</div>
<div class="t" style="left:680.10px;top:607.27px;font-size:11.5px;line-height:11.5px;font-weight:normal;color:#1e1e1e;font-style:normal;transform:scaleX(0.9322);transform-origin:0 0;">10</div>
<div class="t" style="left:760.30px;top:607.27px;font-size:11.5px;line-height:11.5px;font-weight:normal;color:#1e1e1e;font-style:normal;transform:scaleX(0.9633);transform-origin:0 0;">100</div>
<div style="left:888px;top:604px;width:16px;height:16px;background:#ffffff;box-sizing:border-box;border:1px solid #999999;"></div>
<svg style="left:557px;top:629px" width="8" height="2"><rect x="0" y="0" width="2" height="2" fill="#5a5a5a"/><rect x="3" y="0" width="2" height="2" fill="#5a5a5a"/><rect x="6" y="0" width="2" height="2" fill="#5a5a5a"/></svg>
<div style="left:4px;top:635px;width:1px;height:109px;background:#cdcdcd;"></div>
<div style="left:1117px;top:635px;width:1px;height:109px;background:#cdcdcd;"></div>
<div style="left:4px;top:743px;width:1114px;height:1px;background:#cdcdcd;"></div>
<div style="left:4px;top:635px;width:1114px;height:1px;background:#cdcdcd;"></div>
<div style="left:4px;top:636px;width:1113px;height:24px;background:#6754a4;"></div>
<div class="t" style="left:14.40px;top:643.27px;font-size:11.5px;line-height:11.5px;font-weight:bold;color:#ffffff;font-style:normal;transform:scaleX(0.9235);transform-origin:0 0;">Specifications by Ranges - Error Type</div>
<div style="left:7px;top:662px;width:862px;height:26px;background:#efefef;"></div>
<div style="left:7px;top:662px;width:862px;height:1px;background:#a0a0a0;"></div>
<div style="left:7px;top:687px;width:862px;height:1px;background:#a0a0a0;"></div>
<div style="left:7px;top:662px;width:1px;height:26px;background:#a0a0a0;"></div>
<div style="left:868px;top:662px;width:1px;height:26px;background:#a0a0a0;"></div>
<div style="left:18px;top:662px;width:1px;height:25px;background:#a0a0a0;"></div>
<div style="left:51px;top:662px;width:1px;height:25px;background:#a0a0a0;"></div>
<div style="left:127px;top:662px;width:1px;height:25px;background:#a0a0a0;"></div>
<div style="left:223px;top:662px;width:1px;height:25px;background:#a0a0a0;"></div>
<div style="left:307px;top:662px;width:1px;height:25px;background:#a0a0a0;"></div>
<div style="left:381px;top:662px;width:1px;height:25px;background:#a0a0a0;"></div>
<div style="left:458px;top:662px;width:1px;height:25px;background:#a0a0a0;"></div>
<div style="left:532px;top:662px;width:1px;height:25px;background:#a0a0a0;"></div>
<div style="left:636px;top:662px;width:1px;height:25px;background:#a0a0a0;"></div>
<div style="left:699px;top:662px;width:1px;height:25px;background:#a0a0a0;"></div>
<div style="left:763px;top:662px;width:1px;height:25px;background:#a0a0a0;"></div>
<div style="left:19px;top:688px;width:850px;height:21px;background:#f4f4f8;"></div>
<div style="left:7px;top:688px;width:11px;height:21px;background:#efefef;"></div>
<div style="left:7px;top:688px;width:1px;height:21px;background:#a0a0a0;"></div>
<div style="left:18px;top:688px;width:1px;height:21px;background:#a0a0a0;"></div>
<div style="left:7px;top:708px;width:12px;height:1px;background:#a0a0a0;"></div>
<div style="left:51px;top:688px;width:1px;height:21px;background:#e9e9ee;"></div>
<div style="left:127px;top:688px;width:1px;height:21px;background:#e9e9ee;"></div>
<div style="left:223px;top:688px;width:1px;height:21px;background:#e9e9ee;"></div>
<div style="left:307px;top:688px;width:1px;height:21px;background:#e9e9ee;"></div>
<div style="left:381px;top:688px;width:1px;height:21px;background:#e9e9ee;"></div>
<div style="left:458px;top:688px;width:1px;height:21px;background:#e9e9ee;"></div>
<div style="left:532px;top:688px;width:1px;height:21px;background:#e9e9ee;"></div>
<div style="left:636px;top:688px;width:1px;height:21px;background:#e9e9ee;"></div>
<div style="left:699px;top:688px;width:1px;height:21px;background:#e9e9ee;"></div>
<div style="left:763px;top:688px;width:1px;height:21px;background:#e9e9ee;"></div>
<div style="left:868px;top:688px;width:1px;height:21px;background:#e9e9ee;"></div>
<svg style="left:11px;top:694px" width="5" height="8" viewBox="0 0 5 8"><path d="M0 0 L4 4 L0 8 Z" fill="#6a6a6a"/></svg>
<div class="t" style="left:25.40px;top:670.27px;font-size:11.5px;line-height:11.5px;font-weight:normal;color:#1e1e1e;font-style:normal;transform:scaleX(0.8609);transform-origin:0 0;">ID</div>
<div class="t" style="left:58.20px;top:670.27px;font-size:11.5px;line-height:11.5px;font-weight:normal;color:#1e1e1e;font-style:normal;transform:scaleX(0.9333);transform-origin:0 0;">Spec Type</div>
<div class="t" style="left:134.40px;top:670.27px;font-size:11.5px;line-height:11.5px;font-weight:normal;color:#1e1e1e;font-style:normal;transform:scaleX(0.9906);transform-origin:0 0;">Unit Symbol</div>
<div class="t" style="left:230.60px;top:670.27px;font-size:11.5px;line-height:11.5px;font-weight:normal;color:#1e1e1e;font-style:normal;transform:scaleX(0.8663);transform-origin:0 0;">IV Pct</div>
<div class="t" style="left:314.50px;top:670.27px;font-size:11.5px;line-height:11.5px;font-weight:normal;color:#1e1e1e;font-style:normal;transform:scaleX(0.8773);transform-origin:0 0;">IV PPM</div>
<div class="t" style="left:388.60px;top:670.27px;font-size:11.5px;line-height:11.5px;font-weight:normal;color:#1e1e1e;font-style:normal;transform:scaleX(0.8497);transform-origin:0 0;">FS PPM</div>
<div class="t" style="left:465.80px;top:670.27px;font-size:11.5px;line-height:11.5px;font-weight:normal;color:#1e1e1e;font-style:normal;transform:scaleX(0.8112);transform-origin:0 0;">FS_Pct</div>
<div class="t" style="left:539.40px;top:670.27px;font-size:11.5px;line-height:11.5px;font-weight:normal;color:#1e1e1e;font-style:normal;transform:scaleX(1.0174);transform-origin:0 0;">Unit of Measure</div>
<div class="t" style="left:642.80px;top:670.27px;font-size:11.5px;line-height:11.5px;font-weight:normal;color:#1e1e1e;font-style:normal;transform:scaleX(1.0374);transform-origin:0 0;">Floor</div>
<div class="t" style="left:706.30px;top:670.27px;font-size:11.5px;line-height:11.5px;font-weight:normal;color:#1e1e1e;font-style:normal;transform:scaleX(0.9330);transform-origin:0 0;">Full Scale</div>
<div class="t" style="left:770.40px;top:670.27px;font-size:11.5px;line-height:11.5px;font-weight:normal;color:#1e1e1e;font-style:normal;transform:scaleX(0.9665);transform-origin:0 0;">Cal. Interval</div>
<div class="t" style="left:25.20px;top:693.27px;font-size:11.5px;line-height:11.5px;font-weight:normal;color:#1e1e1e;font-style:normal;transform:scaleX(0.9106);transform-origin:0 0;">1212</div>
<div class="t" style="left:54.20px;top:693.27px;font-size:11.5px;line-height:11.5px;font-weight:normal;color:#1e1e1e;font-style:normal;transform:scaleX(0.9267);transform-origin:0 0;">Accuracy</div>
<div class="t" style="left:130.40px;top:693.27px;font-size:11.5px;line-height:11.5px;font-weight:normal;color:#1e1e1e;font-style:normal;transform:scaleX(0.9604);transform-origin:0 0;">A</div>
<div class="t" style="left:298.80px;top:693.27px;font-size:11.5px;line-height:11.5px;font-weight:normal;color:#1e1e1e;font-style:normal;transform:scaleX(0.9401);transform-origin:0 0;">2</div>
<div style="left:336px;top:691px;width:16px;height:16px;background:#ffffff;box-sizing:border-box;border:1px solid #999999;"></div>
<div style="left:412px;top:691px;width:16px;height:16px;background:#ffffff;box-sizing:border-box;border:1px solid #999999;"></div>
<div class="t" style="left:523.40px;top:693.27px;font-size:11.5px;line-height:11.5px;font-weight:normal;color:#1e1e1e;font-style:normal;transform:scaleX(0.9401);transform-origin:0 0;">0</div>
<div class="t" style="left:534.90px;top:693.27px;font-size:11.5px;line-height:11.5px;font-weight:normal;color:#1e1e1e;font-style:normal;transform:scaleX(0.9670);transform-origin:0 0;">ampere</div>
<div class="t" style="left:680.60px;top:693.27px;font-size:11.5px;line-height:11.5px;font-weight:normal;color:#1e1e1e;font-style:normal;transform:scaleX(1.0072);transform-origin:0 0;">0.5</div>
<div class="t" style="left:754.80px;top:693.27px;font-size:11.5px;line-height:11.5px;font-weight:normal;color:#1e1e1e;font-style:normal;transform:scaleX(0.9401);transform-origin:0 0;">0</div>
<div class="t" style="left:848.30px;top:693.27px;font-size:11.5px;line-height:11.5px;font-weight:normal;color:#1e1e1e;font-style:normal;transform:scaleX(0.9008);transform-origin:0 0;">365</div>
<svg style="left:557px;top:748px" width="8" height="2"><rect x="0" y="0" width="2" height="2" fill="#5a5a5a"/><rect x="3" y="0" width="2" height="2" fill="#5a5a5a"/><rect x="6" y="0" width="2" height="2" fill="#5a5a5a"/></svg>
<div style="left:4px;top:754px;width:294px;height:26px;background:#efefef;box-sizing:border-box;border:1px solid #a0a0a0;"></div>
<div style="left:15px;top:754px;width:1px;height:26px;background:#a0a0a0;"></div>
<div style="left:93px;top:754px;width:1px;height:26px;background:#a0a0a0;"></div>
<div class="t" style="left:22.70px;top:761.77px;font-size:11.5px;line-height:11.5px;font-weight:normal;color:#1e1e1e;font-style:normal;transform:scaleX(0.9722);transform-origin:0 0;">Note ID</div>
<div class="t" style="left:99.90px;top:761.77px;font-size:11.5px;line-height:11.5px;font-weight:normal;color:#1e1e1e;font-style:normal;transform:scaleX(0.9762);transform-origin:0 0;">Text</div>
<svg style="left:330px;top:789px" width="2" height="8"><rect x="0" y="0" width="2" height="2" fill="#5a5a5a"/><rect x="0" y="3" width="2" height="2" fill="#5a5a5a"/><rect x="0" y="6" width="2" height="2" fill="#5a5a5a"/></svg>
<div style="left:336px;top:754px;width:299px;height:79px;background:#efefef;box-sizing:border-box;border:1px solid #a6a6a6;"></div>
<svg style="left:639px;top:789px" width="2" height="8"><rect x="0" y="0" width="2" height="2" fill="#5a5a5a"/><rect x="0" y="3" width="2" height="2" fill="#5a5a5a"/><rect x="0" y="6" width="2" height="2" fill="#5a5a5a"/></svg>
<div style="left:645px;top:754px;width:473px;height:80px;background:#ffffff;box-sizing:border-box;border:1px solid #a6a6a6;"></div>
<div style="left:4px;top:833px;width:1px;height:64px;background:#cdcdcd;"></div>
<div style="left:1117px;top:833px;width:1px;height:64px;background:#cdcdcd;"></div>
<div style="left:4px;top:896px;width:1114px;height:1px;background:#cdcdcd;"></div>
<div style="left:4px;top:833px;width:1114px;height:1px;background:#cdcdcd;"></div>
<div style="left:4px;top:834px;width:1113px;height:23px;background:#6754a4;"></div>
<div class="t" style="left:14.40px;top:841.27px;font-size:11.5px;line-height:11.5px;font-weight:bold;color:#ffffff;font-style:normal;transform:scaleX(0.9544);transform-origin:0 0;">Perform Import</div>
<div style="left:7px;top:865px;width:143px;height:25px;box-sizing:border-box;border:1px solid #adadad;background:#ffffff;"></div>
<div class="t" style="left:16.80px;top:872.27px;font-size:11.5px;line-height:11.5px;font-weight:normal;color:#1e1e1e;font-style:normal;transform:scaleX(0.9877);transform-origin:0 0;">Delete Prior Import Data</div>
<div style="left:156px;top:865px;width:165px;height:25px;box-sizing:border-box;border:1px solid #adadad;background:#ffffff;"></div>
<div class="t" style="left:221.60px;top:872.27px;font-size:11.5px;line-height:11.5px;font-weight:normal;color:#1e1e1e;font-style:normal;">Import</div>
</body></html>
